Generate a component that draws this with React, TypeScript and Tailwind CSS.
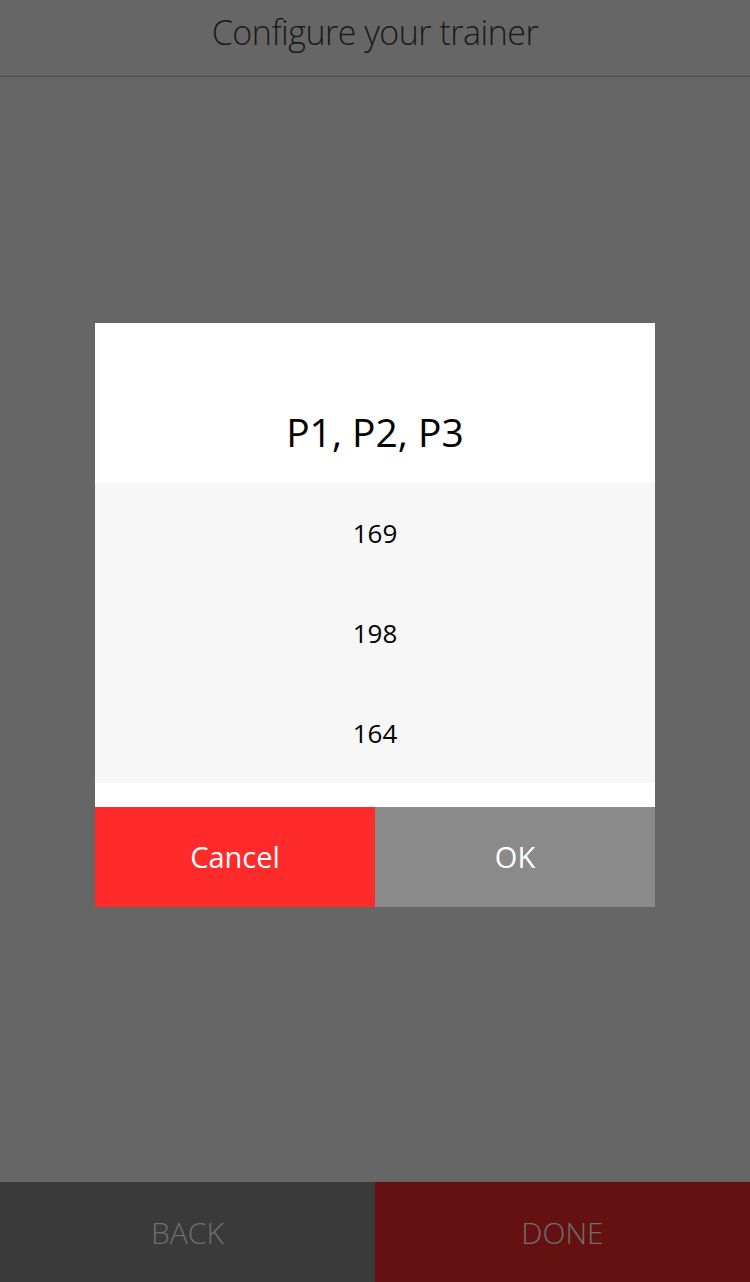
import React from "react";

export default function App() {
  const font = { fontFamily: '"Open Sans", "Noto Sans", sans-serif' };
  return (
    <div className="w-[750px] h-[1282px] bg-[#666666] flex flex-col" style={font}>
      <div className="h-[77px] border-b border-[#4c4c4c] flex items-center justify-center">
        <span className="text-[34px] font-light text-[#1a1a1a] leading-none -mt-[12px] tracking-[-0.5px]">Configure your trainer</span>
      </div>
      <div className="flex-1 flex flex-col items-center pt-[246px]">
        <div className="w-[560px] bg-white flex flex-col">
          <div className="h-[160px] flex items-end justify-center pb-[32px]">
            <span className="text-[39px] text-black leading-none">P1, P2, P3</span>
          </div>
          <div className="bg-[#f7f7f7] flex flex-col">
            {["169", "198", "164"].map((v) => (
              <div key={v} className="h-[100px] flex items-center justify-center text-[26px] text-black">
                {v}
              </div>
            ))}
          </div>
          <div className="h-[24px]" />
          <div className="flex h-[100px]">
            <div className="w-[280px] bg-[#ff2a2a] flex items-center justify-center text-white text-[29px]">Cancel</div>
            <div className="w-[280px] bg-[#8a8a8a] flex items-center justify-center text-white text-[29px]">OK</div>
          </div>
        </div>
      </div>
      <div className="flex h-[100px]">
        <div className="w-[375px] bg-[#3a3a3a] flex items-center justify-center text-[#6e6e6e] text-[30px] font-light">BACK</div>
        <div className="w-[375px] bg-[#661111] flex items-center justify-center text-[#6e6e6e] text-[30px] font-light">DONE</div>
      </div>
    </div>
  );
}
